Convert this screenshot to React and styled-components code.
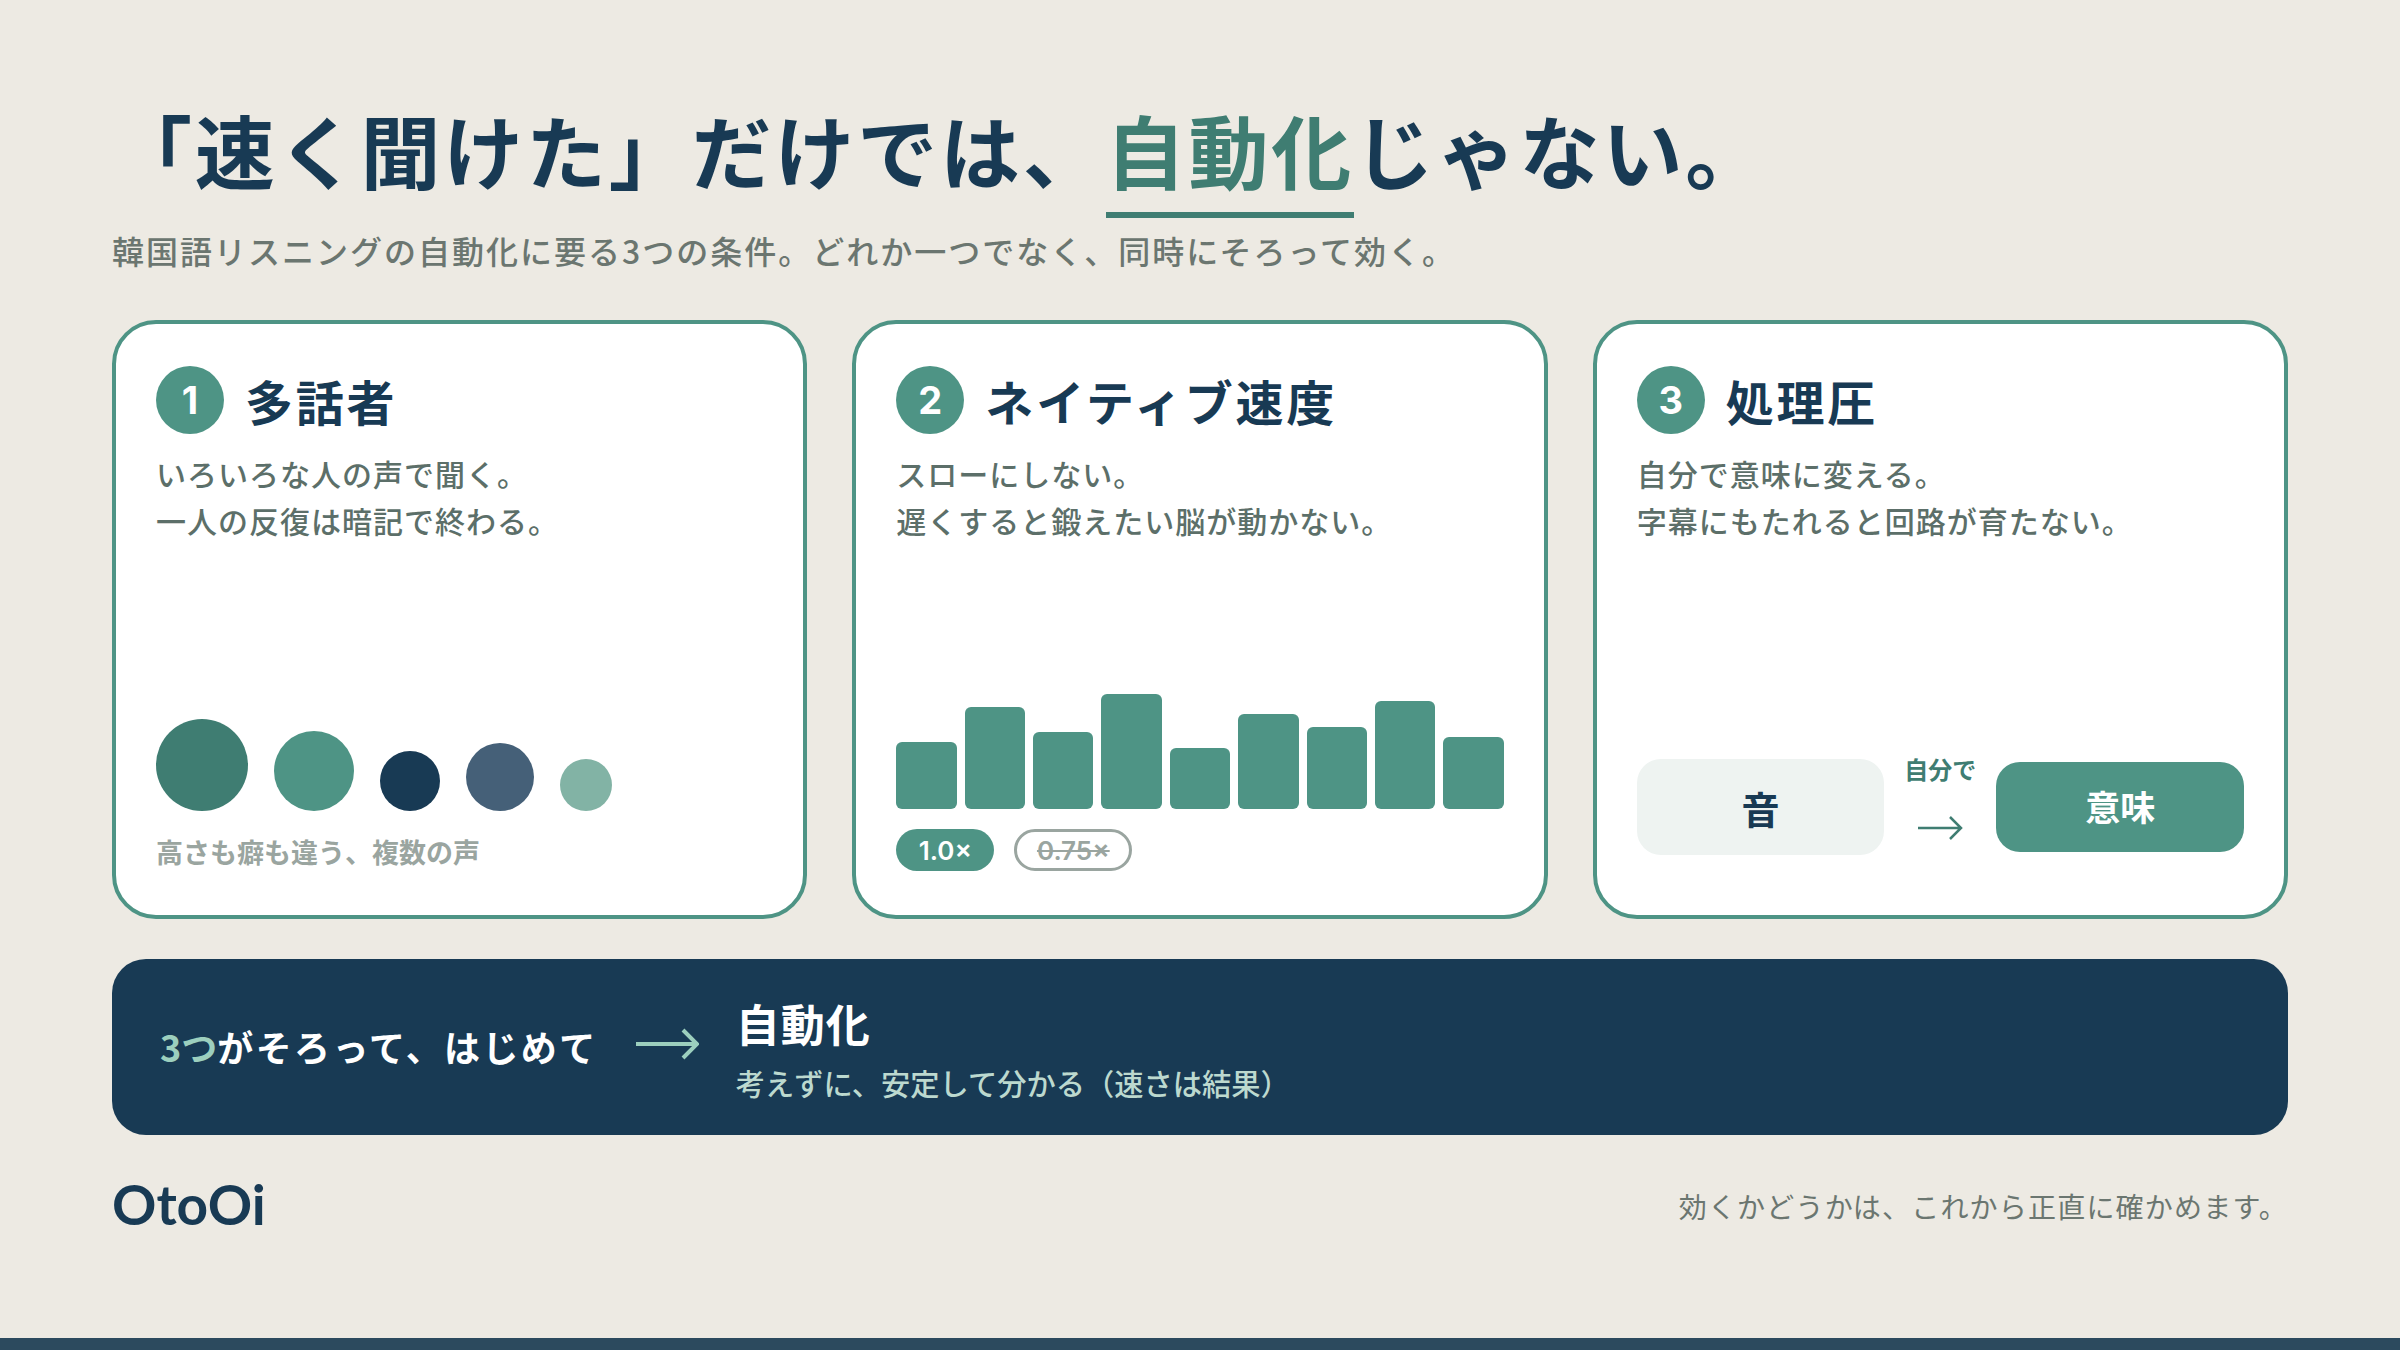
import React from "react";
import styled, { createGlobalStyle } from "styled-components";

const navy = "#183a54";
const teal = "#4e9485";
const deepTeal = "#3f7d72";
const grey = "#6b7670";
const pale = "#9aa5a0";

const Global = createGlobalStyle`
  html, body { margin: 0; padding: 0; background: #edeae3; }
  body { font-family: "Noto Sans CJK JP", "Noto Sans", sans-serif; }
  * { box-sizing: border-box; }
`;

const Slide = styled.main`
  width: 2400px;
  height: 1350px;
  background: #edeae3;
  padding: 100px 112px 0;
  display: flex;
  flex-direction: column;
  position: relative;
  overflow: hidden;
`;
const BottomRule = styled.div`
  position: absolute;
  left: 0;
  right: 0;
  bottom: 0;
  height: 12px;
  background: #2c4a5e;
`;
const Title = styled.h1`
  margin: 0;
  height: 118px;
  font-size: 80px;
  line-height: 96px;
  font-weight: 700;
  letter-spacing: 2.8px;
  color: ${navy};
  white-space: nowrap;
`;
const Accent = styled.span`
  display: inline-block;
  color: ${deepTeal};
  border-bottom: 6px solid ${deepTeal};
  line-height: 96px;
  height: 118px;
`;
const Subtitle = styled.p`
  margin: 9px 0 0;
  font-size: 32px;
  line-height: 46px;
  font-weight: 500;
  letter-spacing: 2px;
  color: ${grey};
  white-space: nowrap;
`;
const CardRow = styled.section`
  margin-top: 47px;
  display: grid;
  grid-template-columns: repeat(3, 1fr);
  gap: 45px;
  height: 599px;
`;
const Card = styled.article`
  background: #fff;
  border: 4px solid ${teal};
  border-radius: 44px;
  padding: 42px 40px 44px;
  display: flex;
  flex-direction: column;
`;
const CardHead = styled.div`
  display: flex;
  align-items: center;
  gap: 21px;
`;
const Num = styled.div`
  width: 68px;
  height: 68px;
  border-radius: 50%;
  background: ${teal};
  color: #fff;
  display: flex;
  align-items: center;
  justify-content: center;
  font-family: "Inter", sans-serif;
  font-size: 38px;
  font-weight: 700;
`;
const CardTitle = styled.h2`
  margin: 0;
  font-size: 48px;
  line-height: 68px;
  font-weight: 700;
  letter-spacing: 2.8px;
  color: ${navy};
`;
const Body = styled.p`
  margin: 16px 0 0;
  font-size: 30px;
  line-height: 46.5px;
  font-weight: 500;
  letter-spacing: 1px;
  color: #5c6f69;
  white-space: pre-line;
`;
const Bottom = styled.div`
  margin-top: auto;
`;
const Voices = styled.div`
  display: flex;
  align-items: flex-end;
  gap: 26px;
`;
const Voice = styled.div`
  width: ${(p) => p.$size}px;
  height: ${(p) => p.$size}px;
  border-radius: 50%;
  background: ${(p) => p.$color};
`;
const Caption = styled.div`
  margin-top: 22px;
  font-size: 27px;
  line-height: 38px;
  font-weight: 700;
  color: ${pale};
`;
const Bars = styled.div`
  display: flex;
  align-items: flex-end;
  gap: 8px;
`;
const Bar = styled.div`
  flex: 1;
  height: ${(p) => p.$h}px;
  border-radius: 6px;
  background: ${teal};
`;
const Pills = styled.div`
  margin-top: 20px;
  display: flex;
  gap: 20px;
`;
const Pill = styled.div`
  height: 42px;
  width: ${(p) => p.$w}px;
  border-radius: 21px;
  display: flex;
  align-items: center;
  justify-content: center;
  font-family: "Inter", sans-serif;
  font-size: 26px;
  font-weight: 600;
  background: ${(p) => (p.$off ? "#fff" : teal)};
  color: ${(p) => (p.$off ? pale : "#fff")};
  border: ${(p) => (p.$off ? `3px solid ${pale}` : "none")};
  text-decoration: ${(p) => (p.$off ? "line-through" : "none")};
`;
const Process = styled.div`
  margin-top: auto;
  margin-bottom: 16px;
  height: 96px;
  display: flex;
  align-items: center;
  gap: 20px;
`;
const SoundBox = styled.div`
  flex: 1;
  height: 96px;
  border-radius: 24px;
  background: #eef3f1;
  color: ${navy};
  font-size: 38px;
  font-weight: 700;
  display: flex;
  align-items: center;
  justify-content: center;
`;
const MeaningBox = styled(SoundBox)`
  height: 90px;
  padding-bottom: 3px;
  font-size: 35px;
  background: ${teal};
  color: #fff;
`;
const Middle = styled.div`
  width: 72px;
  margin-bottom: 20px;
  display: flex;
  flex-direction: column;
  align-items: center;
  gap: 31px;
`;
const MiddleLabel = styled.div`
  font-size: 24px;
  line-height: 30px;
  font-weight: 700;
  color: ${deepTeal};
  white-space: nowrap;
`;
const Banner = styled.section`
  margin-top: 40px;
  height: 176px;
  border-radius: 34px;
  background: ${navy};
  padding: 0 48px;
  display: flex;
  align-items: center;
`;
const BannerLead = styled.div`
  font-size: 36px;
  line-height: 50px;
  font-weight: 700;
  letter-spacing: 2.4px;
  color: #fff;
  margin-bottom: 2px;
  white-space: nowrap;
`;
const Mint = styled.span`
  color: #9ccfbe;
  letter-spacing: 0;
`;
const BannerArrow = styled.svg`
  width: 64px;
  height: 40px;
  margin: 0 37px 6px 37px;
`;
const BannerResult = styled.div`
  margin-top: 6px;
  display: flex;
  flex-direction: column;
  gap: 12px;
`;
const ResultTitle = styled.div`
  font-size: 44px;
  line-height: 52px;
  font-weight: 700;
  letter-spacing: 1px;
  color: #fff;
`;
const ResultSub = styled.div`
  font-size: 29.25px;
  line-height: 42px;
  font-weight: 500;
  color: #bcd9cf;
  white-space: nowrap;
`;
const Footer = styled.footer`
  margin-top: 37px;
  display: flex;
  align-items: center;
  justify-content: space-between;
`;
const Logo = styled.div`
  font-family: "Lato", sans-serif;
  font-size: 55px;
  line-height: 64px;
  font-weight: 700;
  color: ${navy};
`;
const FooterNote = styled.div`
  margin-top: 4px;
  font-size: 28px;
  line-height: 40px;
  letter-spacing: 1.2px;
  color: ${grey};
`;

const voices = [
  [92, "#3f7d72"],
  [80, "#4e9485"],
  [60, "#183a54"],
  [68, "#456078"],
  [52, "#82b3a5"],
];
const bars = [67, 102, 77, 115, 61, 95, 82, 108, 72];

export default function App() {
  return (
    <Slide>
      <Global />
      <Title>
        「速く聞けた」だけでは、<Accent>自動化</Accent>じゃない。
      </Title>
      <Subtitle>韓国語リスニングの自動化に要る3つの条件。どれか一つでなく、同時にそろって効く。</Subtitle>
      <CardRow>
        <Card>
          <CardHead>
            <Num>1</Num>
            <CardTitle>多話者</CardTitle>
          </CardHead>
          <Body>{"いろいろな人の声で聞く。\n一人の反復は暗記で終わる。"}</Body>
          <Bottom>
            <Voices>
              {voices.map(([s, c]) => (
                <Voice key={c} $size={s} $color={c} />
              ))}
            </Voices>
            <Caption>高さも癖も違う、複数の声</Caption>
          </Bottom>
        </Card>
        <Card>
          <CardHead>
            <Num>2</Num>
            <CardTitle>ネイティブ速度</CardTitle>
          </CardHead>
          <Body>{"スローにしない。\n遅くすると鍛えたい脳が動かない。"}</Body>
          <Bottom>
            <Bars>
              {bars.map((h, i) => (
                <Bar key={i} $h={h} />
              ))}
            </Bars>
            <Pills>
              <Pill $w={98}>1.0×</Pill>
              <Pill $w={118} $off>
                0.75×
              </Pill>
            </Pills>
          </Bottom>
        </Card>
        <Card>
          <CardHead>
            <Num>3</Num>
            <CardTitle>処理圧</CardTitle>
          </CardHead>
          <Body>{"自分で意味に変える。\n字幕にもたれると回路が育たない。"}</Body>
          <Process>
            <SoundBox>音</SoundBox>
            <Middle>
              <MiddleLabel>自分で</MiddleLabel>
              <svg width="46" height="26" viewBox="0 0 46 26" fill="none" stroke={deepTeal} strokeWidth="2.5">
                <path d="M1 13H44M33 2L44 13L33 24" />
              </svg>
            </Middle>
            <MeaningBox>意味</MeaningBox>
          </Process>
        </Card>
      </CardRow>
      <Banner>
        <BannerLead>
          <Mint>3つ</Mint>がそろって、はじめて
        </BannerLead>
        <BannerArrow viewBox="0 0 64 40" fill="none" stroke="#9ccfbe" strokeWidth="4">
          <path d="M1 20H62M48 6L62 20L48 34" />
        </BannerArrow>
        <BannerResult>
          <ResultTitle>自動化</ResultTitle>
          <ResultSub>考えずに、安定して分かる（速さは結果）</ResultSub>
        </BannerResult>
      </Banner>
      <Footer>
        <Logo>OtoOi</Logo>
        <FooterNote>効くかどうかは、これから正直に確かめます。</FooterNote>
      </Footer>
      <BottomRule />
    </Slide>
  );
}
